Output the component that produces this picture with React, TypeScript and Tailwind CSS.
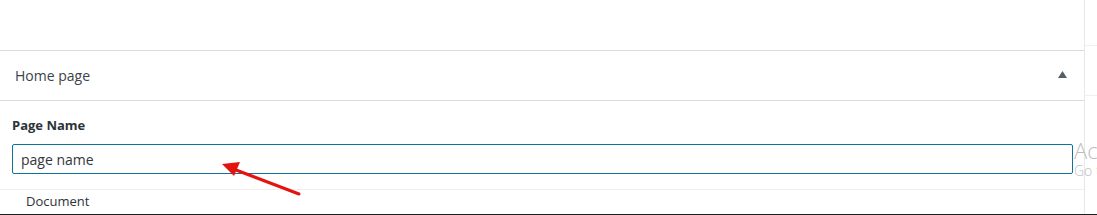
import React from 'react';

const font = { fontFamily: '"Open Sans", "Noto Sans", Arial, sans-serif' };

function Arrow() {
    // red annotation arrow drawn over the input
    return (
        <svg className="absolute left-0 top-0 pointer-events-none" width="1097" height="215" viewBox="0 0 1097 215">
            <line x1="299" y1="194" x2="236" y2="170" stroke="#e3140f" strokeWidth="3" strokeLinecap="round" />
            <polygon points="222,164 240,162 234,176" fill="#e3140f" />
        </svg>
    );
}

export default function App() {
    return (
        <div className="w-[1097px] h-[215px] bg-white relative overflow-hidden flex flex-col" style={font}>
            <div className="flex flex-1">
                <div className="w-[1085px] border-r border-[#e8e8e8] flex flex-col">
                    <div className="h-[50px]" />
                    <div className="h-[51px] border-t border-b border-[#dcdcde] flex items-center justify-between pl-[15px] pr-[17px]">
                        <span className="text-[14px] text-[#3c434a] leading-none">Home page</span>
                        <svg width="9" height="7" viewBox="0 0 9 7" className="-mt-[2px]">
                            <polygon points="4.5,0 9,7 0,7" fill="#555d66" />
                        </svg>
                    </div>
                    <div className="flex flex-col pt-[15px] pb-[15px] border-b border-[#eeeeee]">
                        <label className="pl-[12px] text-[13px] font-bold text-[#2c3338] leading-[18px] mb-[10px]">Page Name</label>
                        <div className="ml-[12px] w-[1061px] h-[30px] border border-[#10719e] rounded-[2px] flex items-center pl-[8px] text-[14px] text-[#32373c]">
                            page name
                        </div>
                    </div>
                    <div className="h-[24px] flex items-center pl-[26px] text-[13px] text-[#2c3338]">Document</div>
                </div>
                <div className="flex-1 flex flex-col">
                    <div className="h-[46px] border-b border-[#f0f0f0]" />
                    <div className="h-[50px] border-b border-[#f0f0f0]" />
                </div>
            </div>
            <div className="h-[2px] bg-[#1d1d1d]" />
            <div className="absolute left-[1074px] top-[138px] text-[#bdbdbd] whitespace-nowrap font-light">
                <div className="text-[22px] leading-[24px]">Activate Windows</div>
                <div className="text-[14px] leading-[18px]">Go to Settings to activate Windows.</div>
            </div>
            <Arrow />
        </div>
    );
}
